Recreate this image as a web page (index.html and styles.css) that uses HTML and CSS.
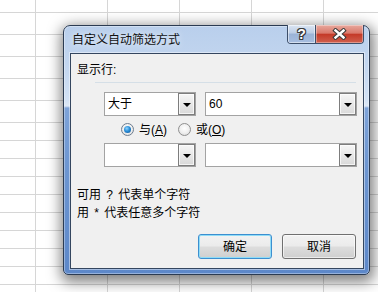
FILE: index.html
```html
<!DOCTYPE html>
<html>
<head>
<meta charset="utf-8">
<link rel="stylesheet" href="styles.css">
</head>
<body>
<div class="sheet">
  <div class="row first"></div>
  <div class="row tall"></div>
  <div class="row tall"></div>
  <div class="row tall"></div>
  <div class="row tall"></div>
  <div class="row tall"></div>
  <div class="row"></div>
  <div class="row"></div>
  <div class="row"></div>
  <div class="row"></div>
  <div class="row"></div>
  <div class="row"></div>
  <div class="row"></div>
  <div class="row"></div>
  <div class="row"></div>
  <div class="row"></div>
</div>

<div class="dialog">
  <div class="titlebar">
    <span class="title">自定义自动筛选方式</span>
    <div class="caps">
      <div class="cap help"><span class="q">?</span></div>
      <div class="cap close">
        <svg width="15" height="12" viewBox="0 0 15 12">
          <path d="M3.5 2.5 L11.5 9.5 M11.5 2.5 L3.5 9.5" stroke="#3a3a3a" stroke-width="4.4" stroke-linecap="square"/>
          <path d="M3.5 2.5 L11.5 9.5 M11.5 2.5 L3.5 9.5" stroke="#ffffff" stroke-width="2.4" stroke-linecap="square"/>
        </svg>
      </div>
    </div>
  </div>
  <div class="client">
    <div class="label">显示行:</div>
    <div class="sep"></div>
    <div class="crow">
      <div class="combo small"><span class="val">大于</span><span class="drop"><i class="tri"></i></span></div>
      <div class="combo big"><span class="val">60</span><span class="drop"><i class="tri"></i></span></div>
    </div>
    <div class="rrow">
      <span class="opt"><span class="radio on"><span class="dot"></span></span>与(<u>A</u>)</span>
      <span class="opt"><span class="radio"></span>或(<u>O</u>)</span>
    </div>
    <div class="crow second">
      <div class="combo small"><span class="val"></span><span class="drop"><i class="tri"></i></span></div>
      <div class="combo big"><span class="val"></span><span class="drop"><i class="tri"></i></span></div>
    </div>
    <div class="hint">
      <div>可用 ? 代表单个字符</div>
      <div>用 * 代表任意多个字符</div>
    </div>
    <div class="btns">
      <div class="btn default">确定</div>
      <div class="btn">取消</div>
    </div>
  </div>
</div>
</body>
</html>
```

FILE: styles.css
```css
html, body {
  margin: 0;
  padding: 0;
}
body {
  width: 378px;
  height: 292px;
  overflow: hidden;
  background: #ffffff;
  font-family: "Liberation Sans", "Noto Sans CJK SC", sans-serif;
  font-size: 12px;
  color: #000;
  position: relative;
}

/* spreadsheet grid */
.sheet {
  width: 378px;
  height: 292px;
  overflow: hidden;
  background-image:
    linear-gradient(to right, transparent 35px, #d6d6d6 35px, #d6d6d6 36px, transparent 36px),
    repeating-linear-gradient(to right, transparent 0, transparent 71px, #d6d6d6 71px, #d6d6d6 72px);
  background-position: 0 0, 36px 0;
  background-repeat: no-repeat, repeat-y;
}
.row {
  box-sizing: border-box;
  height: 18px;
  border-bottom: 1px solid #d6d6d6;
}
.row.first { height: 13px; }
.row.tall { height: 22px; }

/* dialog window */
.dialog {
  position: absolute;
  left: 63px;
  top: 25px;
  width: 307px;
  height: 250px;
  box-sizing: border-box;
  border: 1px solid #2b3b52;
  border-radius: 7px 7px 5px 5px;
  background: linear-gradient(180deg, #b9cfec 0px, #c3d6ef 40px, #d2e1f4 74px, #dde8f6 80px, #7ea3d8 82px, #6d96d1 140px, #5d88c9 100%);
  box-shadow: 0 0 0 1px rgba(255,255,255,0.35) inset, 1px 4px 14px 3px rgba(0,0,0,0.5);
  display: flex;
  flex-direction: column;
}
.titlebar {
  flex: none;
  height: 27px;
  display: flex;
  align-items: center;
  padding-left: 8px;
}
.title {
  font-size: 12px;
  line-height: 16px;
  color: #111;
  text-shadow: 0 0 6px rgba(255,255,255,0.9);
}
.caps {
  margin-left: auto;
  margin-right: 5px;
  align-self: flex-start;
  margin-top: -1px;
  display: flex;
  height: 19px;
  box-sizing: border-box;
  border: 1px solid #3c4e69;
  border-top: none;
  border-radius: 0 0 4px 4px;
  overflow: hidden;
}
.cap {
  height: 100%;
  display: flex;
  align-items: center;
  justify-content: center;
}
.help {
  width: 27px;
  border-right: 1px solid #3c4e69;
  background: linear-gradient(180deg, #dbe5f2 0%, #bccde5 45%, #9bb3d6 50%, #a7bee0 100%);
  box-shadow: inset 0 0 0 1px rgba(255,255,255,0.5);
}
.q {
  font-family: "Liberation Sans", Arial, sans-serif;
  font-weight: bold;
  font-size: 14px;
  line-height: 14px;
  color: #fff;
  text-shadow: 1px 0 #3a3a3a, -1px 0 #3a3a3a, 0 1px #3a3a3a, 0 -1px #3a3a3a, 1px 1px #3a3a3a, -1px -1px #3a3a3a, 1px -1px #3a3a3a, -1px 1px #3a3a3a;
}
.close {
  width: 47px;
  background: linear-gradient(180deg, #e8a89d 0%, #d9796b 45%, #c43a28 52%, #d0604f 100%);
  box-shadow: inset 0 0 0 1px rgba(255,255,255,0.35);
}

/* client area */
.client {
  flex: 1;
  margin: 0 5px 5px 6px;
  background: #f0f0f0;
  border: 1px solid #34465f;
  box-shadow: 0 0 0 1px rgba(255,255,255,0.45);
  display: flex;
  flex-direction: column;
}
.label {
  margin: 8px 0 0 6px;
  line-height: 16px;
}
.sep {
  margin: 4px 7px 0 24px;
  height: 1px;
  background: #d5dfe7;
}
.crow {
  margin-top: 9px;
  padding-left: 33px;
  display: flex;
  gap: 9px;
}
.crow.second { margin-top: 0; }
.combo {
  box-sizing: border-box;
  height: 24px;
  border: 1px solid #a3a3a3;
  background: #fff;
  display: flex;
  align-items: stretch;
}
.combo.small { width: 92px; }
.combo.big { width: 152px; }
.val {
  flex: 1;
  padding-left: 3px;
  line-height: 22px;
}
.drop {
  width: 17px;
  box-sizing: border-box;
  border: 1px solid #7d7d7d;
  background: linear-gradient(180deg, #f6f6f6 0%, #e8e8e8 50%, #d9d9d9 100%);
  box-shadow: inset 0 0 0 1px rgba(255,255,255,0.7);
  display: flex;
  align-items: center;
  justify-content: center;
}
.tri {
  width: 0;
  height: 0;
  border-left: 4px solid transparent;
  border-right: 4px solid transparent;
  border-top: 4px solid #000;
  margin-top: 1px;
}
.rrow {
  height: 27px;
  padding-left: 50px;
  display: flex;
  align-items: center;
  gap: 11px;
}
.opt {
  display: flex;
  align-items: center;
  line-height: 16px;
}
.opt u { text-decoration: underline; }
.radio {
  width: 13px;
  height: 13px;
  box-sizing: border-box;
  border-radius: 50%;
  border: 1px solid #8f8f8f;
  background: radial-gradient(circle at 50% 40%, #ffffff 0%, #f0f0f0 50%, #d4d4d4 100%);
  margin-right: 5px;
  display: flex;
  align-items: center;
  justify-content: center;
}
.radio.on {
  border-color: #6e7d8f;
}
.dot {
  width: 7px;
  height: 7px;
  border-radius: 50%;
  background: radial-gradient(circle at 40% 35%, #8fd3ff 0%, #2a8fd8 45%, #0b4f93 100%);
}
.hint {
  margin: 19px 0 0 6px;
  line-height: 18px;
  word-spacing: 2px;
}
.btns {
  margin-top: 12px;
  padding-right: 7px;
  display: flex;
  justify-content: flex-end;
  gap: 10px;
}
.btn {
  width: 74px;
  height: 25px;
  box-sizing: border-box;
  border: 1px solid #707070;
  border-radius: 3px;
  background: linear-gradient(180deg, #f2f2f2 0%, #ebebeb 48%, #dddddd 52%, #cfcfcf 100%);
  box-shadow: inset 0 0 0 1px rgba(255,255,255,0.6);
  display: flex;
  align-items: center;
  justify-content: center;
  line-height: 16px;
}
.btn.default {
  border-color: #3c8fd0;
  box-shadow: inset 0 0 0 1px #8fdcf7;
}
```
